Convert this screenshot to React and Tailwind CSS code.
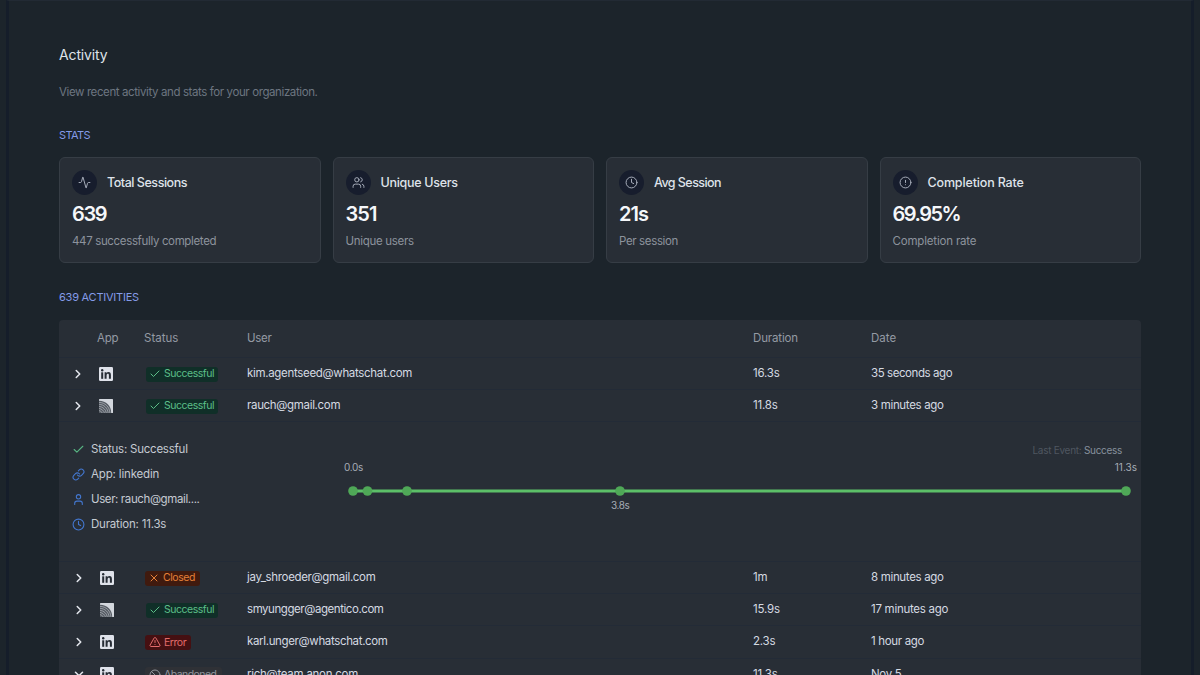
import {
  Activity,
  Users,
  Clock,
  CircleAlert,
  Check,
  X,
  TriangleAlert,
  Ban,
  Link,
  User,
  ChevronRight,
  ChevronDown,
} from "lucide-react";

const STATS = [
  {
    icon: Activity,
    title: "Total Sessions",
    titleTracking: "tracking-[-0.46px]",
    value: "639",
    valueTracking: "tracking-[-1.4px]",
    note: "447 successfully completed",
    noteTracking: "tracking-[-0.35px]",
  },
  {
    icon: Users,
    title: "Unique Users",
    titleTracking: "tracking-[-0.3px]",
    value: "351",
    valueTracking: "tracking-[-0.95px]",
    note: "Unique users",
    noteTracking: "tracking-[-0.3px]",
  },
  {
    icon: Clock,
    title: "Avg Session",
    titleTracking: "tracking-[-0.55px]",
    value: "21s",
    valueTracking: "tracking-[-0.9px]",
    note: "Per session",
    noteTracking: "tracking-[-0.358px]",
  },
  {
    icon: CircleAlert,
    title: "Completion Rate",
    titleTracking: "tracking-[-0.15px]",
    value: "69.95%",
    valueTracking: "tracking-[-1.5px]",
    note: "Completion rate",
    noteTracking: "tracking-[-0.18px]",
  },
];

const BADGES = {
  Successful: {
    icon: Check,
    style: "bg-[#102f28] text-[#5cbf88] ml-[2px] pl-[3px] pr-[4px] tracking-[-0.479px]",
  },
  Closed: {
    icon: X,
    style: "bg-[#401a0e] text-[#e58038] ml-[1px] pl-[3px] pr-[5px] tracking-[-0.434px]",
  },
  Error: {
    icon: TriangleAlert,
    style: "bg-[#451012] text-[#e26c6c] ml-[1px] pl-[4px] pr-[5px] tracking-[-0.45px]",
  },
  Abandoned: {
    icon: Ban,
    style: "bg-[#2f3136] text-[#92959c] ml-[1px] pl-[4px] pr-[5px] tracking-[-0.539px]",
  },
};

const FIRST_ROWS = [
  { app: "linkedin", status: "Successful", user: "kim.agentseed@whatschat.com", userTracking: "tracking-[-0.32px]", duration: "16.3s", date: "35 seconds ago", dateTracking: "tracking-[-0.43px]" },
  { app: "stripes", status: "Successful", user: "rauch@gmail.com", userTracking: "tracking-[-0.33px]", duration: "11.8s", date: "3 minutes ago", dateTracking: "tracking-[-0.33px]" },
];

const LAST_ROWS = [
  { app: "linkedin", status: "Closed", user: "jay_shroeder@gmail.com", userTracking: "tracking-[-0.33px]", duration: "1m", date: "8 minutes ago", dateTracking: "tracking-[-0.33px]" },
  { app: "stripes", status: "Successful", user: "smyungger@agentico.com", userTracking: "tracking-[-0.44px]", duration: "15.9s", date: "17 minutes ago", dateTracking: "tracking-[-0.27px]" },
  { app: "linkedin", status: "Error", user: "karl.unger@whatschat.com", userTracking: "tracking-[-0.35px]", duration: "2.3s", date: "1 hour ago", dateTracking: "tracking-[-0.33px]" },
  { app: "linkedin", status: "Abandoned", user: "rich@team.anon.com", userTracking: "tracking-[-0.27px]", duration: "11.3s", date: "Nov 5", dateTracking: "tracking-[-0.3px]", open: true },
];

const COLUMNS = "grid grid-cols-[38px_47px_103px_506px_118px_1fr] items-center whitespace-nowrap";

function LinkedInIcon() {
  return (
    <svg viewBox="0 0 14 14" className="size-[14px]">
      <rect width="14" height="14" rx="1.2" fill="#dfe2ea" />
      <g fill="#262c35">
        <circle cx="3.2" cy="3.2" r="1.2" />
        <rect x="2.2" y="5.3" width="2" height="6.5" />
        <path d="M5.6 5.3h1.9v0.9c.4-.7 1.1-1.1 2-1.1 1.8 0 2.4 1.1 2.4 2.9v3.8H9.9V8.4c0-.9-.2-1.6-1-1.6-.9 0-1.3.6-1.3 1.6v3.4h-2z" />
      </g>
    </svg>
  );
}

function StripesIcon() {
  return (
    <svg viewBox="0 0 14 14" className="size-[14px]">
      <rect width="14" height="14" rx="0.6" fill="#d3d7dd" />
      <path d="M0 1.8C7.2 1.8 12.2 6.8 12.2 14H0z" fill="#555b63" />
      <g fill="none" stroke="#b4b9c0" strokeWidth="0.7">
        <path d="M0 3.4C6 3.4 10.7 8 10.9 14" />
        <path d="M0 5.3C5 5.6 8.7 9 9.1 14" />
        <path d="M0 7.3C4 7.8 6.8 10.4 7.3 14" />
        <path d="M0 9.4C2.8 10 4.8 11.6 5.4 14" />
        <path d="M0 11.6C1.6 12 2.8 12.8 3.2 14" />
      </g>
    </svg>
  );
}

function StatCard({ stat }) {
  const Icon = stat.icon;
  return (
    <div className="h-[106px] whitespace-nowrap rounded-[6px] border border-[#363d45] bg-[#282e36] px-[12px] pt-[12px]">
      <div className="flex items-center gap-[10px]">
        <div className="flex size-[25px] items-center justify-center rounded-full bg-[#171d2d] text-[#a9afbc]">
          <Icon size={13} strokeWidth={1.8} />
        </div>
        <div className={`text-[12.5px] font-medium leading-[18px] text-[#dfe3ea] ${stat.titleTracking}`}>{stat.title}</div>
      </div>
      <div className={`mt-[5px] text-[20px] font-semibold leading-[28px] text-[#f5f7fa] ${stat.valueTracking}`}>{stat.value}</div>
      <div className={`mt-[4px] text-[11.5px] leading-[18px] text-[#8d939d] ${stat.noteTracking}`}>{stat.note}</div>
    </div>
  );
}

function Badge({ status }) {
  const badge = BADGES[status];
  const Icon = badge.icon;
  return (
    <div className={`mt-[1px] flex h-[15px] w-fit items-center gap-[3px] rounded-[3px] text-[10.5px] ${badge.style}`}>
      <Icon size={12} strokeWidth={2} />
      {status}
    </div>
  );
}

function Row({ row, shifted }) {
  const Chevron = row.open ? ChevronDown : ChevronRight;
  return (
    <div className={`${COLUMNS} h-[32.2px] border-b border-[#232b37] text-[11.5px] text-[#d5dae2]`}>
      <div className={shifted ? "pl-[13px]" : "pl-[12px]"}>
        <Chevron size={14} strokeWidth={2.6} className="text-[#e3e6ec]" />
      </div>
      <div className={shifted ? "pl-[3px]" : "pl-[2px]"}>{row.app === "linkedin" ? <LinkedInIcon /> : <StripesIcon />}</div>
      <Badge status={row.status} />
      <div className={row.userTracking}>{row.user}</div>
      <div className="tracking-[-0.2px]">{row.duration}</div>
      <div className={row.dateTracking}>{row.date}</div>
    </div>
  );
}

const DETAILS = [
  { icon: Check, color: "text-[#58b583]", text: "Status: Successful", tracking: "tracking-[-0.23px]" },
  { icon: Link, color: "text-[#4377cf]", text: "App: linkedin", tracking: "tracking-[-0.16px]" },
  { icon: User, color: "text-[#4377cf]", text: "User: rauch@gmail....", tracking: "tracking-[-0.39px]" },
  { icon: Clock, color: "text-[#4377cf]", text: "Duration: 11.3s", tracking: "tracking-[-0.2px]" },
];

function Timeline() {
  return (
    <div className="flex flex-1 flex-col pt-[19px] text-[10px] text-[#a6acb5]">
      <div className="pr-[19px] text-right leading-[18px] text-[#4f5660]">
        <span className="tracking-[-0.27px]">Last Event: </span>
        <span className="tracking-[-0.3px] text-[#87919d]">Success</span>
      </div>
      <div className="flex justify-between pl-[15px] pr-[4px] leading-[17px]">
        <span className="tracking-[-0.3px]">0.0s</span>
        <span>11.3s</span>
      </div>
      <svg viewBox="0 0 812 12" className="mt-[9px] h-[12px] w-[812px]">
        <path d="M24 6H797" stroke="#5cbf68" strokeWidth="3" />
        <g fill="#4fa857">
          <circle cx="24" cy="6" r="4.8" />
          <circle cx="38.5" cy="6" r="4.8" />
          <circle cx="78" cy="6" r="4.8" />
          <circle cx="291" cy="6" r="4.8" />
          <circle cx="797" cy="6" r="4.8" />
        </g>
      </svg>
      <div className="pl-[282px] leading-[16px] tracking-[-0.45px]">3.8s</div>
    </div>
  );
}

export default function App() {
  return (
    <div className="flex h-[675px] w-[1200px] overflow-hidden bg-[#1c242b] font-['Inter',sans-serif]">
      <div className="ml-[6px] mr-[7px] flex-1 border-x-[3px] border-t border-x-[#151d2a] border-t-[#222a34] px-[50px]">
        <h1 className="mt-[44px] text-[14px] leading-[20px] tracking-[-0.139px] text-[#dfe3e9]">Activity</h1>
        <p className="mt-[18px] text-[11.5px] leading-[18px] tracking-[-0.396px] text-[#6d7681]">View recent activity and stats for your organization.</p>
        <h2 className="mt-[26px] text-[11px] leading-[16px] tracking-[-0.6px] text-[#849be8]">STATS</h2>
        <div className="mt-[14px] grid w-[1082px] grid-cols-4 gap-[12px]">
          {STATS.map((stat) => (
            <StatCard key={stat.title} stat={stat} />
          ))}
        </div>
        <h2 className="mt-[26px] text-[11px] leading-[16px] tracking-[-0.23px] text-[#849be8]">639 ACTIVITIES</h2>
        <div className="mt-[15px] w-[1082px] rounded-t-[4px] bg-[#282e36]">
          <div className={`${COLUMNS} h-[38px] border-b border-[#232b37] pt-[1px] text-[11.5px] text-[#949aa4]`}>
            <div />
            <div className="tracking-[-0.3px]">App</div>
            <div>Status</div>
            <div className="tracking-[-0.29px]">User</div>
            <div className="tracking-[-0.15px]">Duration</div>
            <div>Date</div>
          </div>
          {FIRST_ROWS.map((row) => (
            <Row key={row.user} row={row} />
          ))}
          <div className="flex h-[139.6px] border-b border-[#232b37]">
            <div className="flex w-[270px] flex-col pl-[13px] pt-[15px] text-[11.5px] text-[#c5cad2]">
              {DETAILS.map(({ icon: Icon, color, text, tracking }) => (
                <div key={text} className="flex h-[25px] items-center gap-[6px] whitespace-nowrap">
                  <Icon size={13} strokeWidth={2} className={color} />
                  <span className={tracking}>{text}</span>
                </div>
              ))}
            </div>
            <Timeline />
          </div>
          {LAST_ROWS.map((row) => (
            <Row key={row.user} row={row} shifted />
          ))}
        </div>
      </div>
    </div>
  );
}
